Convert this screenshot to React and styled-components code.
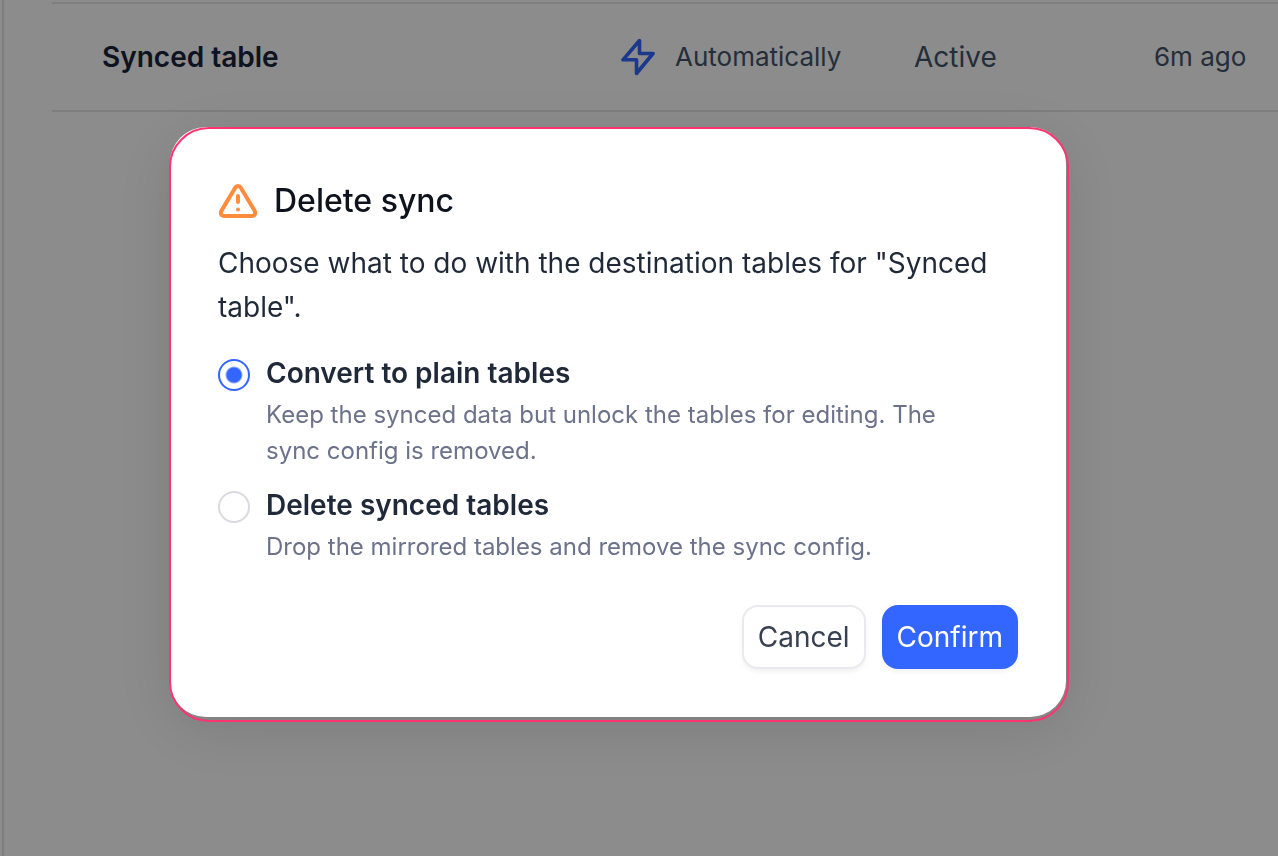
import React, { useState } from "react";
import styled, { createGlobalStyle } from "styled-components";

const GlobalStyle = createGlobalStyle`
  *, *::before, *::after { box-sizing: border-box; }
  body {
    margin: 0;
    background: #fff;
    color: #1f2937;
    font-family: Inter, "Liberation Sans", sans-serif;
    font-size: 28px;
    line-height: 44px;
  }
`;

const Page = styled.main`
  min-height: 100vh;
  margin-left: 2px;
  padding: 2px 0 0 48px;
  border-left: 2px solid #e5e5e8;
`;

const SyncTable = styled.table`
  width: 100%;
  table-layout: fixed;
  border-collapse: separate;
  border-spacing: 0;
  border-top: 2px solid #e5e5e8;
`;

const Cell = styled.td`
  width: ${(p) => p.$width || "auto"};
  height: 108px;
  padding: 0 0 0 24px;
  border-bottom: 2px solid #e5e5e8;
  color: #42546b;
  font-size: ${(p) => (p.$small ? "26px" : "28px")};
  white-space: nowrap;
`;

const NameCell = styled.th`
  padding: 0 0 0 50px;
  border-bottom: 2px solid #e5e5e8;
  color: #18243a;
  font-weight: 600;
  text-align: left;
`;

const Schedule = styled.span`
  display: flex;
  align-items: center;
  gap: 20px;
`;

const Overlay = styled.div`
  position: fixed;
  inset: 0;
  display: flex;
  align-items: center;
  justify-content: center;
  padding: 0 42px 12px 0;
  background: rgba(0, 0, 0, 0.45);
`;

const Dialog = styled.section`
  position: relative;
  width: 100%;
  max-width: 896px;
  padding: 48px;
  border-radius: 36px;
  background: #fff;
  box-shadow: 0 12px 64px rgba(0, 0, 0, 0.12);
`;

const FocusFrame = styled.div`
  position: absolute;
  inset: 0 -3px -5px -1px;
  border: 2px solid #ff3370;
  border-radius: 40px;
  pointer-events: none;
`;

const Header = styled.header`
  display: flex;
  align-items: center;
  gap: 16px;
  margin-bottom: 14px;
`;

const Title = styled.h2`
  margin: 0;
  color: #0d121c;
  font-size: 32px;
  font-weight: 500;
  line-height: 52px;
`;

const Description = styled.p`
  margin: 0 0 24px;
`;

const Options = styled.fieldset`
  display: grid;
  gap: 16px;
  margin: 0 0 40px;
  padding: 0;
  border: 0;
`;

const Option = styled.div`
  display: flex;
  align-items: flex-start;
  gap: 16px;
`;

const Radio = styled.input`
  appearance: none;
  flex: none;
  width: 32px;
  height: 32px;
  margin: 6px 0 0;
  border: 2px solid #d9dae0;
  border-radius: 50%;
  background: #fff;

  &:checked {
    border-color: #3366ff;
    background: radial-gradient(circle, #3366ff 7px, transparent 9px);
  }
`;

const OptionText = styled.div`
  display: grid;
  gap: 4px;
  padding-right: 32px;
`;

const OptionLabel = styled.label`
  font-weight: 600;
  line-height: 40px;
`;

const OptionHint = styled.p`
  margin: 0;
  color: #6b7289;
  font-size: 24px;
  line-height: 36px;
`;

const Actions = styled.footer`
  display: flex;
  justify-content: flex-end;
  gap: 16px;
`;

const Button = styled.button`
  height: 64px;
  padding: 0 ${(p) => (p.$primary ? "15px" : "14px")};
  border: ${(p) => (p.$primary ? "0" : "2px solid #e9eaed")};
  border-radius: 16px;
  background: ${(p) => (p.$primary ? "#3366ff" : "#fff")};
  color: ${(p) => (p.$primary ? "#fff" : "#374151")};
  box-shadow: 0 3px 4px rgba(0, 0, 0, 0.05);
  font: inherit;
`;

const choices = [
  {
    id: "convert",
    label: "Convert to plain tables",
    hint: "Keep the synced data but unlock the tables for editing. The sync config is removed.",
  },
  {
    id: "drop",
    label: "Delete synced tables",
    hint: "Drop the mirrored tables and remove the sync config.",
  },
];

function BoltIcon() {
  return (
    <svg width="34" height="38" viewBox="0 0 34 38" fill="none" stroke="#3366ff" strokeWidth="3.6" strokeLinejoin="round" aria-hidden="true">
      <path d="M18.5 2.5 2 21.8H15.5V35.5L32 15.5H18.5Z" />
    </svg>
  );
}

function WarningIcon() {
  return (
    <svg width="40" height="36" viewBox="0 0 40 36" fill="none" stroke="#ff8b3d" strokeWidth="4" strokeLinecap="round" strokeLinejoin="round" aria-hidden="true">
      <path d="M17.2 4.8 3.5 27.6C1.9 30.4 3.2 33 6.5 33H33.5C36.8 33 38.1 30.4 36.5 27.6L22.8 4.8C21.5 2.5 18.5 2.5 17.2 4.8Z" />
      <path d="M20 13V19" />
      <path d="M20 26.5H20.01" />
    </svg>
  );
}

export default function App() {
  const [choice, setChoice] = useState("convert");
  return (
    <>
      <GlobalStyle />
      <Page>
        <SyncTable>
          <tbody>
            <tr>
              <NameCell scope="row">Synced table</NameCell>
              <Cell $width="293px" $small>
                <Schedule>
                  <BoltIcon />
                  Automatically
                </Schedule>
              </Cell>
              <Cell $width="240px">Active</Cell>
              <Cell $width="148px" $small>6m ago</Cell>
            </tr>
          </tbody>
        </SyncTable>
      </Page>
      <Overlay>
        <Dialog role="dialog" aria-modal="true" aria-labelledby="dialog-title">
          <Header>
            <WarningIcon />
            <Title id="dialog-title">Delete sync</Title>
          </Header>
          <Description>
            Choose what to do with the destination tables for "Synced table".
          </Description>
          <Options aria-labelledby="dialog-title">
            {choices.map((c) => (
              <Option key={c.id}>
                <Radio
                  type="radio"
                  name="sync-action"
                  id={c.id}
                  checked={choice === c.id}
                  onChange={() => setChoice(c.id)}
                  aria-describedby={`${c.id}-hint`}
                />
                <OptionText>
                  <OptionLabel htmlFor={c.id}>{c.label}</OptionLabel>
                  <OptionHint id={`${c.id}-hint`}>{c.hint}</OptionHint>
                </OptionText>
              </Option>
            ))}
          </Options>
          <Actions>
            <Button type="button">Cancel</Button>
            <Button type="button" $primary>Confirm</Button>
          </Actions>
          <FocusFrame />
        </Dialog>
      </Overlay>
    </>
  );
}
